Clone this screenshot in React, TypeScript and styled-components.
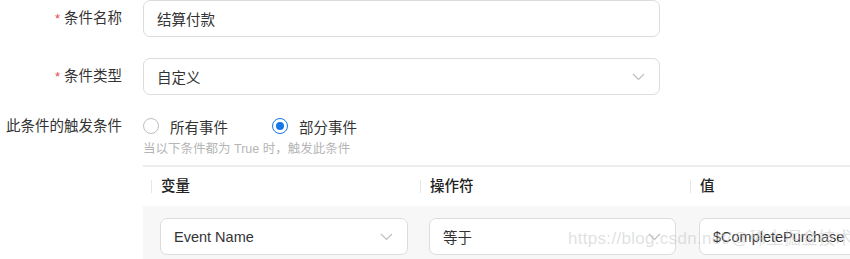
import React from "react"
import styled, { createGlobalStyle } from "styled-components"

const GlobalStyle = createGlobalStyle`
	html, body {
		margin: 0;
		padding: 0;
		background: #fff;
		overflow: hidden;
	}
	body {
		font-family: "Liberation Sans", "Noto Sans CJK SC", sans-serif;
		color: #333;
	}
`

const Page = styled.div`
	width: 850px;
	height: 259px;
	position: relative;
	overflow: hidden;
`

const FormRow = styled.div<{ $top: number }>`
	display: flex;
	align-items: flex-start;
	margin-top: ${(p) => p.$top}px;
`

const Label = styled.div<{ $lineHeight: number }>`
	width: 122px;
	flex: none;
	text-align: right;
	font-size: 14.5px;
	line-height: ${(p) => p.$lineHeight}px;
	color: #333;
	margin-right: 21px;
	white-space: nowrap;
`

const Star = styled.span`
	color: #e5484d;
	margin-right: 4px;
	font-size: 13px;
`

const Field = styled.div<{ $width: number; $height?: number }>`
	width: ${(p) => p.$width}px;
	height: ${(p) => p.$height ?? 37}px;
	box-sizing: border-box;
	border: 1px solid #dcdcdc;
	border-radius: 7px;
	background: #fff;
	display: flex;
	align-items: center;
	padding: 0 14px 0 13px;
	font-size: 14.5px;
	color: #333;
	flex: none;
	white-space: nowrap;
	overflow: hidden;
`

const FieldText = styled.span`
	flex: 1;
`

const Chevron = () => (
	<svg width="13" height="8" viewBox="0 0 13 8" fill="none">
		<path d="M1 1l5.5 5.5L12 1" stroke="#bdbdbd" strokeWidth="1.1" />
	</svg>
)

const Content = styled.div`
	display: flex;
	flex-direction: column;
`

const RadioGroup = styled.div`
	display: flex;
	align-items: center;
	height: 26px;
	gap: 44px;
`

const RadioItem = styled.label`
	display: flex;
	align-items: center;
	gap: 11px;
	font-size: 14.5px;
	color: #333;
`

const RadioCircle = styled.span<{ $checked?: boolean }>`
	width: 16px;
	height: 16px;
	box-sizing: border-box;
	border-radius: 50%;
	border: 1px solid ${(p) => (p.$checked ? "#1677e6" : "#bfbfbf")};
	display: flex;
	align-items: center;
	justify-content: center;

	&::after {
		content: "";
		width: 8px;
		height: 8px;
		border-radius: 50%;
		background: ${(p) => (p.$checked ? "#1677e6" : "transparent")};
	}
`

const Hint = styled.div`
	font-size: 12.5px;
	color: #b5b5b5;
	line-height: 16px;
	margin-top: 2px;
`

const Table = styled.div`
	margin-top: 8px;
	width: 830px;
	border-top: 2px solid #ececec;
`

const TRow = styled.div<{ $body?: boolean }>`
	display: grid;
	grid-template-columns: 8px 269px 270px 283px;
	height: ${(p) => (p.$body ? 53 : 39)}px;
	background: ${(p) => (p.$body ? "#f7f7f7" : "#fff")};
	align-items: ${(p) => (p.$body ? "start" : "center")};
`

const Th = styled.div<{ $sep?: boolean }>`
	font-size: 14.5px;
	font-weight: 500;
	color: #222;
	padding-left: 9px;
	border-left: ${(p) => (p.$sep ? "1px solid #e6e6e6" : "none")};
	line-height: 13px;
	height: 13px;
	display: flex;
	align-items: center;
`

const Td = styled.div`
	padding: 12px 0 0 9px;
`

const Watermark = styled.div`
	position: absolute;
	left: 568px;
	top: 224px;
	font-size: 17px;
	color: rgba(200, 200, 200, 0.55);
	white-space: nowrap;
	pointer-events: none;
	letter-spacing: 0.3px;
`

export default function App() {
	return (
		<Page>
			<GlobalStyle />
			<FormRow $top={0}>
				<Label $lineHeight={37}>
					<Star>*</Star>条件名称
				</Label>
				<Field $width={517}>
					<FieldText>结算付款</FieldText>
				</Field>
			</FormRow>
			<FormRow $top={21}>
				<Label $lineHeight={37}>
					<Star>*</Star>条件类型
				</Label>
				<Field $width={517}>
					<FieldText>自定义</FieldText>
					<Chevron />
				</Field>
			</FormRow>
			<FormRow $top={18}>
				<Label $lineHeight={26}>此条件的触发条件</Label>
				<Content>
					<RadioGroup>
						<RadioItem>
							<RadioCircle />
							所有事件
						</RadioItem>
						<RadioItem>
							<RadioCircle $checked />
							部分事件
						</RadioItem>
					</RadioGroup>
					<Hint>当以下条件都为 True 时，触发此条件</Hint>
					<Table>
						<TRow>
							<div />
							<Th $sep>变量</Th>
							<Th $sep>操作符</Th>
							<Th $sep>值</Th>
						</TRow>
						<TRow $body>
							<div />
							<Td>
								<Field $width={248}>
									<FieldText>Event Name</FieldText>
									<Chevron />
								</Field>
							</Td>
							<Td>
								<Field $width={247}>
									<FieldText>等于</FieldText>
									<Chevron />
								</Field>
							</Td>
							<Td>
								<Field $width={200}>
									<FieldText>$CompletePurchase</FieldText>
								</Field>
							</Td>
						</TRow>
					</Table>
				</Content>
			</FormRow>
			<Watermark>https://blog.csdn.net/@稀土掘金技术社区</Watermark>
		</Page>
	)
}
